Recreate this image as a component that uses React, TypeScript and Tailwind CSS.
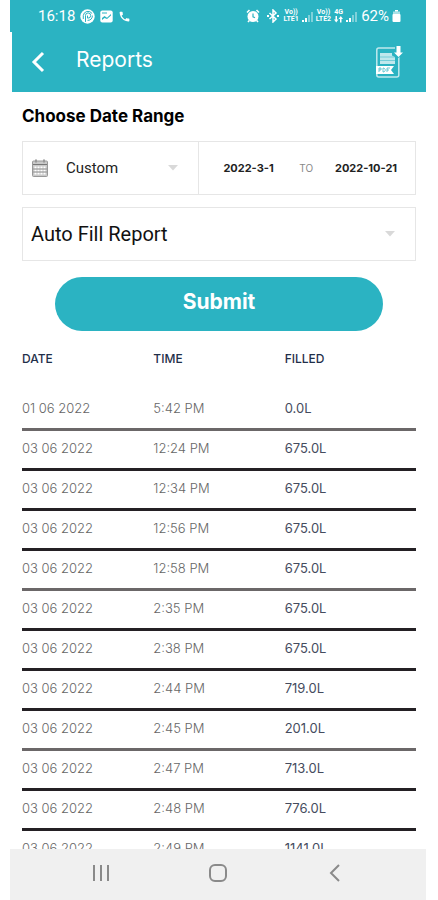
import type { ReactNode } from "react";

const rows = [
  { date: "01 06 2022", time: "5:42 PM", filled: "0.0L" },
  { date: "03 06 2022", time: "12:24 PM", filled: "675.0L" },
  { date: "03 06 2022", time: "12:34 PM", filled: "675.0L" },
  { date: "03 06 2022", time: "12:56 PM", filled: "675.0L" },
  { date: "03 06 2022", time: "12:58 PM", filled: "675.0L" },
  { date: "03 06 2022", time: "2:35 PM", filled: "675.0L" },
  { date: "03 06 2022", time: "2:38 PM", filled: "675.0L" },
  { date: "03 06 2022", time: "2:44 PM", filled: "719.0L" },
  { date: "03 06 2022", time: "2:45 PM", filled: "201.0L" },
  { date: "03 06 2022", time: "2:47 PM", filled: "713.0L" },
  { date: "03 06 2022", time: "2:48 PM", filled: "776.0L" },
  { date: "03 06 2022", time: "2:49 PM", filled: "1141.0L" },
];

const Signal = () => (
  <svg width="11" height="11" viewBox="0 0 11 11" fill="white" aria-hidden="true">
    <path d="M0 9h2v2H0zM3 7h2v4H3z" />
    <path d="M6 4h2v7H6zM9 1h2v10H9z" opacity=".4" />
  </svg>
);

const Network = ({ top, bottom }: { top: string; bottom: string }) => (
  <span className="flex flex-col items-center text-[7px] leading-[7px] font-bold">
    <span>{top}</span>
    <span>{bottom}</span>
  </span>
);

const StatusBar = () => (
  <div className="h-8 bg-[#2bb3c2] pl-7 pr-[25px] flex items-center justify-between text-white font-['Roboto',sans-serif]">
    <div className="flex items-center gap-1">
      <span className="text-[15px] leading-5 mr-px">16:18</span>
      <svg width="15" height="15" viewBox="0 0 15 15" aria-hidden="true">
        <circle cx="7.5" cy="7.5" r="7.2" fill="white" />
        <g fill="none" stroke="#2bb3c2" strokeWidth="1" strokeLinecap="round">
          <path d="M5.5 12.5V6.5a2.6 2.6 0 1 1 2.6 2.6H7.5V7" />
          <path d="M3.3 9.6V6.5a4.8 4.8 0 0 1 8.6-2.3M12.4 7a4.6 4.6 0 0 1-4.4 4.4" />
        </g>
      </svg>
      <svg className="ml-px" width="13" height="13" viewBox="0 0 13 13" aria-hidden="true">
        <rect x=".3" y=".5" width="12.4" height="12" rx="2" fill="white" />
        <path d="M2 10V8l2.5-2 2.5 1.800L11 4v1.500L7 9 4.500 8z" fill="#2bb3c2" />
        <path d="M2 3h5" stroke="#2bb3c2" />
      </svg>
      <svg className="ml-px" width="13" height="13" viewBox="0 0 24 24" fill="white" aria-hidden="true">
        <path d="M6.6 10.8c1.4 2.8 3.8 5.1 6.6 6.6l2.2-2.2c.3-.3.7-.4 1-.2 1.1.4 2.3.6 3.6.6.6 0 1 .4 1 1V20c0 .6-.4 1-1 1C10.6 21 3 13.4 3 4c0-.6.4-1 1-1h3.5c.6 0 1 .4 1 1 0 1.2.2 2.4.6 3.6.1.3 0 .7-.2 1z" />
      </svg>
    </div>
    <div className="flex items-center gap-[3px]">
      <svg className="mr-1" width="14" height="14" viewBox="0 0 14 14" aria-hidden="true">
        <circle cx="7" cy="7.5" r="5.5" fill="white" />
        <path d="M1 3.5 3.5 1M13 3.5 10.5 1M3.3 11.5 2 13M10.700 11.5 12 13" stroke="white" strokeWidth="1.6" />
        <path d="M7 4.5v3.3l2 1" stroke="#2bb3c2" strokeWidth="1.2" fill="none" />
      </svg>
      <svg className="mr-[2px]" width="12" height="14" viewBox="0 0 12 14" fill="none" stroke="white" strokeWidth="1.5" aria-hidden="true">
        <path d="M2.5 4 9 10l-3 3V1l3 3-6.5 6" />
        <path d="M0 7h2M10 7h2" strokeWidth="2" />
      </svg>
      <Network top="Vo))" bottom="LTE1" />
      <Signal />
      <Network top="Vo))" bottom="LTE2" />
      <span className="flex flex-col items-center text-[7px] leading-[7px] font-bold">
        <span>4G</span>
        <svg width="9" height="7" viewBox="0 0 9 7" fill="white" aria-hidden="true">
          <path d="M1.500 0h1.500v3.500h1.500L2.200 6.500 0 3.500h1.500zM6 6.500h1.500V3H9L6.800 0 4.500 3H6z" />
        </svg>
      </span>
      <Signal />
      <span className="text-[15px] leading-5 ml-px">62%</span>
      <svg width="9" height="12" viewBox="0 0 9 12" fill="white" aria-hidden="true">
        <path d="M3 0h3v1.5H3z" />
        <path d="M1 1.5h7V5H1z" opacity=".6" />
        <rect x=".5" y="4" width="8" height="8" rx="1" />
      </svg>
    </div>
  </div>
);

const Header = () => (
  <header className="h-[60px] ml-[2px] bg-[#2bb3c2] pl-4 pr-[22px] flex items-center text-white">
    <button type="button" aria-label="Back" className="w-6 h-8 flex items-center">
      <svg width="20" height="22" viewBox="0 0 20 22" fill="none" stroke="white" strokeWidth="3">
        <path d="M15 2 6 11l9 9" />
      </svg>
    </button>
    <h1 className="flex-1 pl-6 pb-1 text-[21px] leading-7">Reports</h1>
    <button type="button" aria-label="Download report">
      <svg width="30" height="34" viewBox="0 0 30 34">
        <rect x="2.8" y="3" width="22" height="29" rx="2" fill="none" stroke="white" strokeOpacity=".7" strokeWidth="1.5" />
        <path d="M6 8h12v2.500l3 1.500v7H6z" fill="white" opacity=".7" />
        <path d="M6 12h15M6 15.500h15" stroke="#2bb3c2" strokeWidth=".5" />
        <path d="M2 21h18l-3 4 3 4H2z" fill="white" />
        <path d="M5 27v-4h2v2H5M9 23v4c3 0 3-4 0-4M13 27v-4h3M13 25h2" fill="none" stroke="#2bb3c2" strokeWidth=".7" />
        <path d="M21 0h7v7h2l-5.500 6L19 7h2z" fill="#2bb3c2" />
        <path d="M22.500 1h4v6.500H29L24.500 12 20 7.500h2.500z" fill="white" />
      </svg>
    </button>
  </header>
);

const Caret = () => (
  <svg className="shrink-0 pointer-events-none" width="10" height="6" viewBox="0 0 10 6" fill="#d9d9d9" aria-hidden="true">
    <path d="M0 0h10L5 5.5z" />
  </svg>
);

const CalendarIcon = () => (
  <svg className="shrink-0" width="16" height="18" viewBox="0 0 16 18" aria-hidden="true">
    <rect x=".5" y="2" width="15" height="15.5" rx="1" fill="#c9c9c9" stroke="#999" />
    <path d="M1 5.5h14" stroke="#777" />
    <path d="M4 .5v3M12 .5v3" stroke="#999" strokeWidth="2" />
    <path d="M2.5 8.5h11M2.5 11.5h11M2.5 14.5h11" stroke="#fff" strokeWidth="1.8" strokeDasharray="2 1" />
    <path d="M1 10h14M1 13h14" stroke="#888" strokeWidth=".8" />
  </svg>
);

const Th = ({ children }: { children: ReactNode }) => (
  <th className="h-[50px] p-0 pb-[14px] text-left align-middle text-[12px] leading-4 font-medium text-[#1f2f4a]">{children}</th>
);

const NavBar = () => (
  <nav className="h-[51px] shrink-0 bg-[#f0f0f0] flex items-center justify-around px-[33px] pb-1">
    <button type="button" aria-label="Recent apps">
      <svg width="18" height="18" viewBox="0 0 18 18" stroke="#8a8a8a" strokeWidth="2">
        <path d="M2 1v16M9 1v16M16 1v16" />
      </svg>
    </button>
    <button type="button" aria-label="Home">
      <svg width="18" height="18" viewBox="0 0 18 18" fill="none" stroke="#8a8a8a" strokeWidth="2">
        <rect x="1" y="1" width="16" height="16" rx="5" />
      </svg>
    </button>
    <button type="button" aria-label="Go back">
      <svg width="18" height="18" viewBox="0 0 18 18" fill="none" stroke="#8a8a8a" strokeWidth="2">
        <path d="M13 1 5 9l8 8" />
      </svg>
    </button>
  </nav>
);

export default function App() {
  return (
    <div className="h-screen bg-white pl-[10px] pr-3 flex flex-col font-['Inter',sans-serif]">
      <StatusBar />
      <Header />
      <main className="flex-1 min-h-0 overflow-hidden pl-3 pr-[10px]">
        <h2 className="pt-3 text-[17px] leading-6 font-bold text-black">Choose Date Range</h2>

        <div className="mt-[13px] h-[54px] border border-[#e6e6e6] flex">
          <div className="w-[45%] border-r border-[#e6e6e6] pl-[9px] pr-5 flex items-center">
            <CalendarIcon />
            <select
              aria-label="Date range"
              className="flex-1 min-w-0 h-full pl-[18px] appearance-none bg-transparent outline-none text-[15px] text-[#222] font-['Roboto',sans-serif]"
            >
              <option>Custom</option>
            </select>
            <Caret />
          </div>
          <div className="flex-1 min-w-0 pl-6 pr-[14px] flex items-center justify-between text-[11px] font-bold text-[#222]">
            <input aria-label="From date" defaultValue="2022-3-1" className="w-[54px] outline-none" />
            <span className="text-[10px] font-normal text-[#888]">TO</span>
            <input aria-label="To date" defaultValue="2022-10-21" className="w-[66px] outline-none" />
          </div>
        </div>

        <div className="mt-3 h-[54px] border border-[#e6e6e6] pl-2 pr-5 flex items-center">
          <select
            aria-label="Report type"
            className="flex-1 min-w-0 h-full appearance-none bg-transparent outline-none text-[20px] text-[#111] font-['Roboto',sans-serif]"
          >
            <option>Auto Fill Report</option>
          </select>
          <Caret />
        </div>

        <div className="mt-4 px-[33px]">
          <button type="button" className="w-full h-[54px] pb-1 rounded-full bg-[#2bb3c2] text-white text-[21px] font-bold">
            Submit
          </button>
        </div>

        <table className="mt-[10px] w-full table-fixed border-separate border-spacing-0">
          <thead>
            <tr>
              <Th>DATE</Th>
              <Th>TIME</Th>
              <Th>FILLED</Th>
            </tr>
          </thead>
          <tbody className="text-[13px] leading-4">
            {rows.map((row, i) => (
              <tr
                key={i}
                className={i % 4 === 0 ? "*:border-b-3 *:border-[#6b6768]" : "*:border-b-3 *:border-[#242024]"}
              >
                <td className="h-10 p-0 pb-1 font-light text-[#666]">{row.date}</td>
                <td className="h-10 p-0 pb-1 font-light text-[#666]">{row.time}</td>
                <td className="h-10 p-0 pb-1 text-[#454c5e]">{row.filled}</td>
              </tr>
            ))}
          </tbody>
        </table>
      </main>
      <NavBar />
    </div>
  );
}
